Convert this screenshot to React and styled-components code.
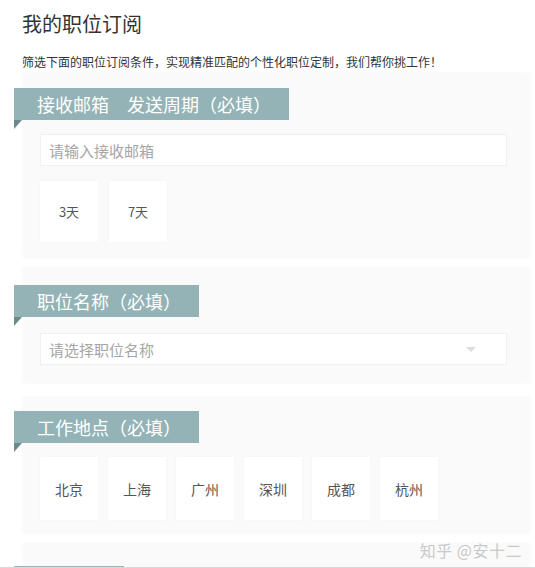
import React from "react";
import styled, { createGlobalStyle } from "styled-components";

const Global = createGlobalStyle`
  html, body { margin: 0; padding: 0; background: #fff; }
  body {
    font-family: "Noto Sans CJK SC", "Noto Sans", "Liberation Sans", sans-serif;
    color: #333;
    width: 535px;
    height: 568px;
    overflow: hidden;
    position: relative;
  }
`;

const Page = styled.div`
  padding: 10px 5px 0 22px;
  position: relative;
  height: 568px;
  box-sizing: border-box;
  overflow: hidden;
`;

const Title = styled.h1`
  margin: 0;
  font-size: 20px;
  font-weight: 400;
  line-height: 28px;
  color: #333;
`;

const Intro = styled.p`
  margin: 16px 0 3px;
  font-size: 12px;
  line-height: 16px;
  color: #333;
`;

const Panel = styled.section`
  margin-left: 1px;
  width: 507px;
  box-sizing: border-box;
  background: #fafafa;
  box-shadow: 0 0 4px rgba(0, 0, 0, 0.03);
  padding: ${(p) => p.$pad || "15px 23px 16px 17px"};
  margin-bottom: ${(p) => p.$gap || "10px"};
  display: flex;
  flex-direction: column;
  gap: ${(p) => p.$inner || "14px"};
`;

const Ribbon = styled.div`
  position: relative;
  align-self: flex-start;
  margin-left: -26px;
  height: 32px;
  min-width: ${(p) => p.$w || "0"};
  box-sizing: border-box;
  padding: 0 18px 0 23px;
  background: #93b3b6;
  color: #fff;
  font-size: 18px;
  line-height: 32px;
  white-space: pre;
  &::after {
    content: "";
    position: absolute;
    left: 0;
    top: 100%;
    width: 0;
    height: 0;
    border-top: 9px solid #6c8a8d;
    border-left: 8px solid transparent;
    transform: scaleX(-1);
    transform-origin: 4px 0;
  }
`;

const Field = styled.div`
  height: 32px;
  box-sizing: border-box;
  background: #fff;
  border: 1px solid #f0f0f0;
  display: flex;
  align-items: center;
  justify-content: space-between;
  padding: 0 30px 0 8px;
  font-size: 15px;
  color: #a6a6a6;
`;

const Caret = styled.span`
  width: 0;
  height: 0;
  border-left: 5px solid transparent;
  border-right: 5px solid transparent;
  border-top: 5px solid #dcdcdc;
`;

const Options = styled.div`
  display: flex;
  gap: ${(p) => p.$gap || "10px"};
  padding-top: 1px;
`;

const Option = styled.div`
  width: ${(p) => p.$w || "58px"};
  height: ${(p) => p.$h || "60px"};
  background: #fff;
  box-shadow: 0 0 3px rgba(0, 0, 0, 0.03);
  display: flex;
  align-items: center;
  justify-content: center;
  font-size: ${(p) => p.$fs || "13px"};
  color: #555;
`;

const Watermark = styled.div`
  position: absolute;
  right: 13px;
  top: 538px;
  font-size: 16px;
  color: #c9c9c9;
  letter-spacing: 0.5px;
`;

const BottomLine = styled.div`
  position: absolute;
  left: 0;
  right: 0;
  bottom: 0;
  height: 1px;
  background: #d9d9d9;
`;

const cities = ["北京", "上海", "广州", "深圳", "成都", "杭州"];

export default function App() {
  return (
    <>
      <Global />
      <Page>
        <Title>我的职位订阅</Title>
        <Intro>筛选下面的职位订阅条件，实现精准匹配的个性化职位定制，我们帮你挑工作！</Intro>

        <Panel $gap="10px">
          <Ribbon>接收邮箱　发送周期（必填）</Ribbon>
          <Field>请输入接收邮箱</Field>
          <Options $gap="11px">
            <Option $w="58px" $h="61px">3天</Option>
            <Option $w="58px" $h="61px">7天</Option>
          </Options>
        </Panel>

        <Panel $pad="17px 23px 18px 17px" $inner="16px" $gap="14px">
          <Ribbon>职位名称（必填）</Ribbon>
          <Field>
            请选择职位名称
            <Caret />
          </Field>
        </Panel>

        <Panel $pad="14px 23px 13px 17px" $inner="13px">
          <Ribbon>工作地点（必填）</Ribbon>
          <Options $gap="10px">
            {cities.map((c) => (
              <Option key={c} $w="58px" $h="63px" $fs="14px">
                {c}
              </Option>
            ))}
          </Options>
        </Panel>

        <Panel $pad="23px 23px 16px 17px">
          <Ribbon $w="110px" />
        </Panel>

        <Watermark>知乎 @安十二</Watermark>
      </Page>
      <BottomLine />
    </>
  );
}
